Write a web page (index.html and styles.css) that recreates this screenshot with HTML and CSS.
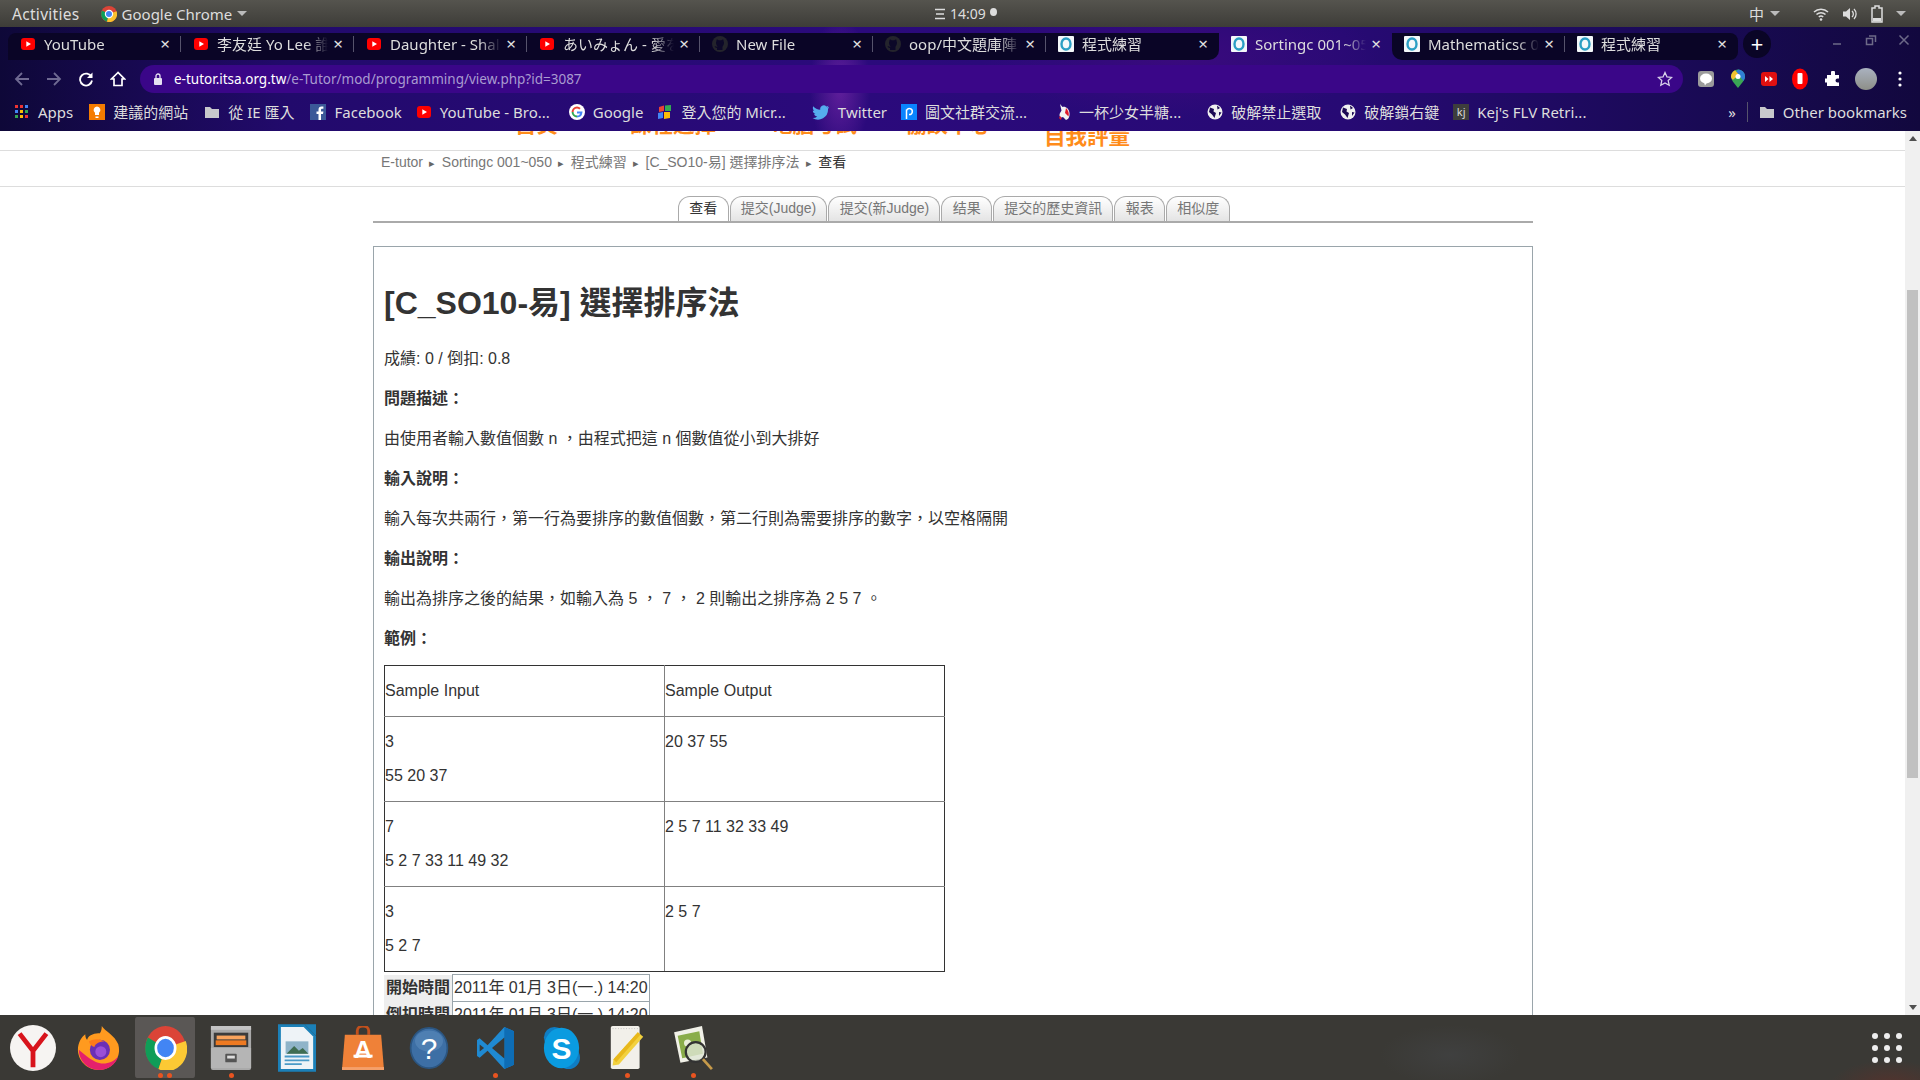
FILE: index.html
```html
<!DOCTYPE html>
<html lang="zh-Hant">
<head>
    <meta charset="UTF-8">
    <title>程式練習</title>
    <link rel="stylesheet" href="styles.css">
</head>
<body>

<svg class="defs" width="0" height="0">
    <symbol id="yt" viewBox="0 0 16 16"><rect x="1" y="2" width="14" height="12" rx="3" fill="#f00"/><path d="M6.3 5.2 11 8l-4.700 2.800z" fill="#fff"/></symbol>
    <symbol id="gh" viewBox="0 0 16 16"><circle cx="8" cy="8" r="8" fill="#24242c"/><path d="M5 14V12C3 12 3 10.500 2.500 10 4 10 4 11 5.500 11 5.500 10 4 9 4 7 4 6 4.300 5.500 4.500 5 4.400 4 4.700 3.500 5 3.500 5.500 3.500 6.300 4 6.500 4.300h3C9.700 4 10.500 3.500 11 3.500c.3 0 .6.500.5 1.500.2.500.5 1 .5 2 0 2-1.500 3-1.500 4v3z" fill="#0c0828"/></symbol>
    <symbol id="itsa" viewBox="0 0 16 16"><rect width="16" height="16" rx="1" fill="#f4f8fa"/><ellipse cx="8" cy="8" rx="4.500" ry="5.500" fill="none" stroke="#2b9fc4" stroke-width="2.400"/></symbol>
    <symbol id="globe" viewBox="0 0 16 16"><circle cx="8" cy="8" r="7.500" fill="#f0f0f0"/><path d="M3 3.500 7 5 6.500 7.500 9 9 7.500 14 5 10.500 2 8zM10 1.500 13 4 10.500 5.500zM12 8l2.500.5L12 12z" fill="#1d0a55"/></symbol>
    <symbol id="folder" viewBox="0 0 16 16"><path d="M1 3h5l2 2h7v9H1z" fill="#c8c8cc"/></symbol>
</svg>

<!-- Ubuntu top bar -->
<div class="topbar">
    <div class="top-left">
        <span class="activities">Activities</span>
        <span class="app-name">
            <svg width="16" height="16" viewBox="0 0 16 16"><circle cx="8" cy="8" r="8" fill="#db4437"/><path d="M8 8 1 4.500A8 8 0 0 0 6 15.800z" fill="#0f9d58"/><path d="M8 8l7.500-2.800A8 8 0 0 1 6 15.800z" fill="#fbc02d"/><circle cx="8" cy="8" r="3.600" fill="#4285f4" stroke="#fff" stroke-width="1.200"/></svg>
            Google Chrome <i class="caret"></i>
        </span>
    </div>
    <div class="clock">
        <svg width="12" height="12" viewBox="0 0 12 12"><path d="M1 1.500h10M2 6h8M1 10.500h10" stroke="#ddd" stroke-width="1.500"/></svg>
        <span>14:09</span><i class="clock-dot"></i>
    </div>
    <div class="top-right">
        <span class="ime">中</span><i class="caret"></i>
        <svg class="wifi" width="16" height="16" viewBox="0 0 16 16"><path d="M1 6a10 10 0 0 1 14 0M3.500 8.500a6.500 6.500 0 0 1 9 0M5.800 11a3.300 3.300 0 0 1 4.400 0" fill="none" stroke="#ddd" stroke-width="1.500"/><circle cx="8" cy="13.500" r="1.300" fill="#ddd"/></svg>
        <svg width="16" height="16" viewBox="0 0 16 16"><path d="M1 5.500h3L8 2v12l-4-3.500H1z" fill="#ddd"/><path d="M10 5a4 4 0 0 1 0 6M12 3a7 7 0 0 1 0 10" fill="none" stroke="#ddd" stroke-width="1.300"/></svg>
        <svg width="12" height="18" viewBox="0 0 12 18"><path d="M4 1h4v2h3v14H1V3h3z" fill="none" stroke="#ddd" stroke-width="1.500"/><rect x="2" y="13" width="8" height="3.500" fill="#ddd"/></svg>
        <i class="caret"></i>
    </div>
</div>

<!-- Chrome window frame -->
<div class="chrome">
    <div class="tabstrip">
        <div class="tab"><svg class="favicon"><use href="#yt"/></svg><span class="tab-title">YouTube</span><span class="tab-x">×</span></div>
        <div class="tab"><svg class="favicon"><use href="#yt"/></svg><span class="tab-title">李友廷 Yo Lee 誰</span><span class="tab-x">×</span></div>
        <div class="tab"><svg class="favicon"><use href="#yt"/></svg><span class="tab-title">Daughter - Shall</span><span class="tab-x">×</span></div>
        <div class="tab"><svg class="favicon"><use href="#yt"/></svg><span class="tab-title">あいみょん - 愛を</span><span class="tab-x">×</span></div>
        <div class="tab"><svg class="favicon"><use href="#gh"/></svg><span class="tab-title">New File</span><span class="tab-x">×</span></div>
        <div class="tab"><svg class="favicon"><use href="#gh"/></svg><span class="tab-title">oop/中文題庫陣</span><span class="tab-x">×</span></div>
        <div class="tab before-active"><svg class="favicon"><use href="#itsa"/></svg><span class="tab-title">程式練習</span><span class="tab-x">×</span></div>
        <div class="tab active"><svg class="favicon"><use href="#itsa"/></svg><span class="tab-title">Sortingc 001~05</span><span class="tab-x">×</span></div>
        <div class="tab after-active"><svg class="favicon"><use href="#itsa"/></svg><span class="tab-title">Mathematicsc 0</span><span class="tab-x">×</span></div>
        <div class="tab last"><svg class="favicon"><use href="#itsa"/></svg><span class="tab-title">程式練習</span><span class="tab-x">×</span></div>
        <div class="new-tab">+</div>
        <div class="window-btns">
            <svg width="12" height="12" viewBox="0 0 12 12"><path d="M1 10h8" stroke="#6d6a88" stroke-width="1.500"/></svg>
            <svg width="12" height="12" viewBox="0 0 12 12"><path d="M1.500 4.500h6v6h-6zM4 2h6.500v6" fill="none" stroke="#6d6a88" stroke-width="1.500"/></svg>
            <svg width="12" height="12" viewBox="0 0 12 12"><path d="M1.500 1.500l9 9M10.500 1.500l-9 9" stroke="#6d6a88" stroke-width="1.500"/></svg>
        </div>
    </div>

    <div class="toolbar">
        <div class="nav-btns">
            <svg width="16" height="16" viewBox="0 0 16 16"><path d="M15 8H2M8 2 2 8l6 6" fill="none" stroke="#6f6a92" stroke-width="1.800"/></svg>
            <svg width="16" height="16" viewBox="0 0 16 16"><path d="M1 8h13M8 2l6 6-6 6" fill="none" stroke="#6f6a92" stroke-width="1.800"/></svg>
            <svg width="16" height="16" viewBox="0 0 16 16"><path d="M13.500 6A6 6 0 1 0 14 9.500" fill="none" stroke="#fff" stroke-width="1.800"/><path d="M14.500 1.500V7H9z" fill="#fff"/></svg>
            <svg width="16" height="16" viewBox="0 0 16 16"><path d="M8 1.500 1.500 8H4v6.500h8V8h2.500z" fill="none" stroke="#fff" stroke-width="1.700"/></svg>
        </div>
        <div class="omnibox">
            <svg width="10" height="12" viewBox="0 0 10 12"><rect x="1" y="5" width="8" height="7" rx="1" fill="#e6e0f2"/><path d="M3 5V3a2 2 0 0 1 4 0v2" fill="none" stroke="#e6e0f2" stroke-width="1.300"/></svg>
            <span class="url"><b>e-tutor.itsa.org.tw</b>/e-Tutor/mod/programming/view.php?id=3087</span>
            <svg class="star" width="16" height="16" viewBox="0 0 16 16"><path d="M8 1.500l2 4.400 4.700.5-3.500 3.200 1 4.700L8 11.900l-4.200 2.400 1-4.700L1.300 6.400 6 5.900z" fill="none" stroke="#d8d2ea" stroke-width="1.300"/></svg>
        </div>
        <div class="ext-btns">
            <svg width="18" height="18" viewBox="0 0 18 18"><rect x="1" y="1" width="16" height="16" rx="3" fill="#9b9b9b"/><ellipse cx="9" cy="8.500" rx="6" ry="5" fill="#fff"/><path d="M7 12.500h3l-2 3z" fill="#fff"/></svg>
            <svg width="18" height="20" viewBox="0 0 18 20"><path d="M9 19C5 14 2 11 2 7.500a7 7 0 0 1 14 0C16 11 13 14 9 19z" fill="#3aa655"/><path d="M9 .5a7 7 0 0 1 7 7c0 1.500-.5 2.800-1.500 4.500L7 3z" fill="#2f7fd6"/><path d="M2 7.500C2 5 3.500 2.500 6 1.200l4 4.500-6 5C2.500 9.700 2 8.500 2 7.500z" fill="#f2c230"/><circle cx="9" cy="7.500" r="2.500" fill="#fff"/></svg>
            <svg width="16" height="14" viewBox="0 0 16 14"><rect width="16" height="14" rx="3" fill="#e01010"/><path d="M4 4l3.500 3L4 10zM8.500 4l3.500 3-3.500 3z" fill="#fff"/></svg>
            <svg width="18" height="22" viewBox="0 0 18 22"><ellipse cx="9" cy="11" rx="8" ry="10.500" fill="#f00"/><rect x="6.500" y="5" width="5" height="11" rx="1" fill="#fff"/></svg>
            <svg class="puzzle" width="16" height="16" viewBox="0 0 16 16"><path d="M6 1.500a2 2 0 0 1 4 0V4h4v3.500h-1.500a2 2 0 0 0 0 4H14V15H2v-3.500H.5a2 2 0 0 1 0-4H2V4h4z" fill="#fff"/></svg>
            <span class="avatar"></span>
            <svg width="4" height="16" viewBox="0 0 4 16"><circle cx="2" cy="2" r="1.600" fill="#fff"/><circle cx="2" cy="8" r="1.600" fill="#fff"/><circle cx="2" cy="14" r="1.600" fill="#fff"/></svg>
        </div>
    </div>

    <div class="bookmarks">
        <div class="bm first">
            <svg width="14" height="14" viewBox="0 0 14 14"><g><rect x="0" y="0" width="3" height="3" fill="#e33"/><rect x="5" y="0" width="3" height="3" fill="#e33"/><rect x="10" y="0" width="3" height="3" fill="#4285f4"/><rect x="0" y="5" width="3" height="3" fill="#4285f4"/><rect x="5" y="5" width="3" height="3" fill="#fbbc05"/><rect x="10" y="5" width="3" height="3" fill="#34a853"/><rect x="0" y="10" width="3" height="3" fill="#34a853"/><rect x="5" y="10" width="3" height="3" fill="#fbbc05"/><rect x="10" y="10" width="3" height="3" fill="#e33"/></g></svg>
            Apps
        </div>
        <div class="bm"><svg width="16" height="16" viewBox="0 0 16 16"><rect width="16" height="16" fill="#f57c00"/><path d="M8 2.500a3.500 3.500 0 0 1 2 6.300V11H6V8.800a3.500 3.500 0 0 1 2-6.300zM6.500 12.500h3V14h-3z" fill="#fff"/></svg>建議的網站</div>
        <div class="bm"><svg width="16" height="16"><use href="#folder"/></svg>從 IE 匯入</div>
        <div class="bm tight"><svg width="16" height="16" viewBox="0 0 16 16"><rect width="16" height="16" fill="#3b5998"/><path d="M11 16V10h2l.4-2.500H11V6c0-.8.3-1.200 1.200-1.200h1.200V2.600C13 2.500 12.300 2.500 11.600 2.500 9.700 2.500 8.500 3.600 8.500 5.700v1.800h-2V10h2v6z" fill="#fff"/></svg>Facebook</div>
        <div class="bm long"><svg width="16" height="16"><use href="#yt"/></svg>YouTube - Bro...</div>
        <div class="bm tight"><svg width="16" height="16" viewBox="0 0 16 16"><circle cx="8" cy="8" r="8" fill="#fff"/><path d="M8 3.500a4.500 4.500 0 0 1 3 1.200" fill="none" stroke="#ea4335" stroke-width="2"/><path d="M3.600 8a4.500 4.500 0 0 1 4.400-4.500" fill="none" stroke="#ea4335" stroke-width="2"/><path d="M3.600 8A4.500 4.500 0 0 0 8 12.500" fill="none" stroke="#34a853" stroke-width="2"/><path d="M8 12.500a4.500 4.500 0 0 0 4.400-4H8" fill="none" stroke="#4285f4" stroke-width="2"/></svg>Google</div>
        <div class="bm wide"><svg width="16" height="16" viewBox="0 0 16 16"><path d="M2 3l5-1.500v5.500L2 8z" fill="#ea4335"/><path d="M8 1.500 14 1v6L8 7z" fill="#34a853"/><path d="M1 9l5-1v6l-5 1z" fill="#4285f4"/><path d="M7 8l6 0v6l-6 1z" fill="#fbbc05"/></svg>登入您的 Micr...</div>
        <div class="bm tight"><svg width="18" height="16" viewBox="0 0 18 16"><path d="M17 3c-.6.300-1.300.500-2 .6.700-.4 1.300-1.100 1.500-1.900-.7.400-1.400.7-2.200.9a3.500 3.500 0 0 0-6 3.200C5.500 5.600 3 4.300 1.300 2.200c-.9 1.600-.5 3.600 1 4.700-.5 0-1-.2-1.500-.4 0 1.700 1.200 3.100 2.800 3.500-.5.100-1 .2-1.600.1.500 1.400 1.800 2.400 3.300 2.400A7 7 0 0 1 .5 14 10 10 0 0 0 16 5c.4-.5.800-1.200 1-2z" fill="#55acee"/></svg>Twitter</div>
        <div class="bm widest"><svg width="16" height="16" viewBox="0 0 16 16"><rect width="16" height="16" fill="#0a84ff"/><path d="M5.500 15V5.500M5.500 6.500A3 3 0 1 1 8 10.500" fill="none" stroke="#fff" stroke-width="1.500"/></svg>圖文社群交流...</div>
        <div class="bm wide"><svg width="14" height="18" viewBox="0 0 14 18"><path d="M3 1l2.500 3C8 3 12 5 12.500 10c.3 3-.5 6-3.500 7L6 14c-2 1-3.500 0-3.500-2S4 9 4.500 7.500z" fill="#f2f2f2"/><path d="M9 5c2 2 3.500 5 2.500 8.500L8 10z" fill="#e01a2b"/><path d="M3 13c1 1 2 2 1 4L2 15z" fill="#e01a2b"/></svg>一杯少女半糖...</div>
        <div class="bm long"><svg width="16" height="16"><use href="#globe"/></svg>破解禁止選取</div>
        <div class="bm tight"><svg width="16" height="16"><use href="#globe"/></svg>破解鎖右鍵</div>
        <div class="bm"><span class="kj">kj</span>Kej's FLV Retri...</div>
        <div class="bm-more">»</div>
        <div class="bm other"><svg width="16" height="16"><use href="#folder"/></svg>Other bookmarks</div>
    </div>
</div>

<!-- Page in the browser -->
<div class="viewport">
    <div class="page">
        <div class="site-menu">
            <span>首頁</span>
            <span>課程選擇</span>
            <span>電腦考試</span>
            <span>協談中心</span>
            <span class="low">自我評量</span>
        </div>
        <div class="breadcrumb">
            <a>E-tutor</a> <i>▸</i> <a>Sortingc 001~050</a> <i>▸</i> <a>程式練習</a> <i>▸</i> <a>[C_SO10-易] 選擇排序法</a> <i>▸</i> 查看
        </div>
        <div class="tabs">
            <a class="tabs-on">查看</a>
            <a>提交(Judge)</a>
            <a>提交(新Judge)</a>
            <a>结果</a>
            <a>提交的歷史資訊</a>
            <a>報表</a>
            <a>相似度</a>
        </div>
        <div class="box">
            <h1>[C_SO10-易] 選擇排序法</h1>
            <p>成績: 0 / 倒扣: 0.8</p>
            <p><strong>問題描述：</strong></p>
            <p>由使用者輸入數值個數 n ，由程式把這 n 個數值從小到大排好</p>
            <p><strong>輸入說明：</strong></p>
            <p>輸入每次共兩行，第一行為要排序的數值個數，第二行則為需要排序的數字，以空格隔開</p>
            <p><strong>輸出說明：</strong></p>
            <p>輸出為排序之後的結果，如輸入為 5 ， 7 ， 2 則輸出之排序為 2 5 7 。</p>
            <p><strong>範例：</strong></p>
            <table class="samples">
                <tr><td><p>Sample Input</p></td><td><p>Sample Output</p></td></tr>
                <tr><td><p>3</p><p>55 20 37</p></td><td><p>20 37 55</p></td></tr>
                <tr><td><p>7</p><p>5 2 7 33 11 49 32</p></td><td><p>2 5 7 11 32 33 49</p></td></tr>
                <tr><td><p>3</p><p>5 2 7</p></td><td><p>2 5 7</p></td></tr>
            </table>
            <table class="times">
                <tr><th>開始時間</th><td>2011年 01月 3日(一.) 14:20</td></tr>
                <tr><th>倒扣時間</th><td>2011年 01月 3日(一.) 14:20</td></tr>
            </table>
        </div>
    </div>
    <div class="scrollbar">
        <i class="arrow-up"></i>
        <div class="thumb"></div>
        <i class="arrow-down"></i>
    </div>
</div>

<!-- Ubuntu dock -->
<div class="dock">
    <div class="dock-item">
        <svg width="46" height="46" viewBox="0 0 48 48"><ellipse cx="24" cy="24" rx="24" ry="24" fill="#f6f4f2"/><path d="M10 9l14 18 14-18M24 26v18" fill="none" stroke="#d8141c" stroke-width="5"/></svg>
    </div>
    <div class="dock-item">
        <svg width="44" height="46" viewBox="0 0 48 50"><path d="M27 1c4 6 14 10 18 20 4 14-6 28-21 28C10 49 1 38 1 27c0-8 4-14 8-17 0 3 1 5 2 6 2-6 9-7 14-7 2-3 2-6 2-8z" fill="#ff9a1f"/><path d="M2 27c0 12 10 22 22 22 10 0 18-6 21-15-6 8-17 10-25 6C12 36 8 32 2 27z" fill="#e5206c"/><circle cx="25" cy="27" r="11" fill="#6b2fb5"/><path d="M13 18c6-4 13-3 17 0-5 0-10 2-11 6-3-1-5-3-6-6z" fill="#ff7a1a"/><circle cx="26" cy="29" r="6" fill="#9a4fd6"/></svg>
    </div>
    <div class="dock-item active">
        <svg width="43" height="44" viewBox="0 0 46 50"><ellipse cx="23" cy="25" rx="23" ry="25" fill="#db4437"/><path d="M23 25 3 13A23 25 0 0 0 15 49z" fill="#0f9d58"/><path d="M23 25 46 17A23 25 0 0 1 15 49z" fill="#fcc934"/><ellipse cx="23" cy="25" rx="11" ry="12" fill="#4285f4" stroke="#fff" stroke-width="3"/></svg>
        <i class="pip"></i><i class="pip"></i>
    </div>
    <div class="dock-item">
        <svg width="42" height="44" viewBox="0 0 42 46"><rect width="42" height="46" rx="2" fill="#a9a9a9"/><rect width="42" height="4" fill="#c4c4c4"/><rect x="3" y="7" width="36" height="15" fill="#3b3b3b"/><rect x="6" y="10" width="30" height="4" fill="#f9a35c"/><rect x="5" y="15" width="32" height="5" fill="#ee7a22"/><rect x="0" y="23" width="42" height="21" fill="#b5b5b5"/><rect x="15" y="29" width="12" height="9" rx="1" fill="#555"/><rect x="17" y="31" width="8" height="3" fill="#ddd"/></svg>
        <i class="pip"></i>
    </div>
    <div class="dock-item">
        <svg width="38" height="48" viewBox="0 0 40 50"><path d="M0 0h28l12 12v38H0z" fill="#1b80b8"/><path d="M3 3h24l10 10v34H3z" fill="#eef3f7"/><path d="M28 0l12 12V0z" fill="#1b80b8"/><rect x="8" y="18" width="24" height="13" fill="#8fb4c9"/><path d="M9 31l8-8 5 5 4-3 6 6z" fill="#3f6d52"/><path d="M7 34h26M7 38h26M7 42h18" stroke="#4a9ac7" stroke-width="2"/></svg>
    </div>
    <div class="dock-item">
        <svg width="42" height="44" viewBox="0 0 44 46"><path d="M16 9V5a6 5 0 0 1 12 0v4" fill="none" stroke="#c2501c" stroke-width="3"/><path d="M3 9h38l3 37H0z" fill="#ef8138"/><rect x="0" y="43" width="44" height="3" fill="#f5a06b"/><text x="22" y="34" class="store-a">A</text><rect x="12" y="30" width="20" height="3" fill="#fff"/></svg>
    </div>
    <div class="dock-item">
        <svg width="40" height="42" viewBox="0 0 44 48"><ellipse cx="22" cy="24" rx="21" ry="23" fill="#3d6fa5" stroke="#2b5580" stroke-width="2"/><ellipse cx="22" cy="16" rx="16" ry="12" fill="#5f8fc0" opacity=".5"/><text x="22" y="36" class="help-q">?</text></svg>
    </div>
    <div class="dock-item">
        <svg width="43" height="44" viewBox="0 0 44 50"><path d="M32 1 13 22 4 14 1 16v18l3 2 9-8 19 21 11-5V6z" fill="#1f8ad2"/><path d="M32 1v48l11-5V6z" fill="#0e6db5"/><path d="M32 13 18 25l14 12z" fill="#3a3935"/><path d="M4 21 9 25 4 29z" fill="#3a3935"/></svg>
        <i class="pip"></i>
    </div>
    <div class="dock-item">
        <svg width="43" height="44" viewBox="0 0 44 50"><circle cx="14" cy="13" r="12" fill="#0f7dc4"/><circle cx="30" cy="36" r="13" fill="#0f7dc4"/><ellipse cx="22" cy="25" rx="20" ry="23" fill="#0a9be0"/><text x="22" y="37" class="skype-s">S</text></svg>
    </div>
    <div class="dock-item">
        <svg width="38" height="45" viewBox="0 0 38 50"><rect x="1" y="1" width="32" height="48" rx="2" fill="#f2f0ea"/><path d="M3 4h28" stroke="#bbb" stroke-dasharray="1 2"/><path d="M31 8l6 5L10 44l-7 1 1-7z" fill="#f2d13e"/><path d="M31 8l3 2.500L7 41.500 4 38z" fill="#e8b81c"/></svg>
        <i class="pip"></i>
    </div>
    <div class="dock-item">
        <svg width="44" height="45" viewBox="0 0 48 50"><path d="M3 8 34 1l6 35-30 6z" fill="#f1f1e8"/><path d="M7 12l24-5 4 25-23 5z" fill="#8aad4a"/><circle cx="18" cy="20" r="4" fill="#e9eed8"/><circle cx="27" cy="30" r="11" fill="#dfe6d5" stroke="#333" stroke-width="2.500" fill-opacity=".8"/><path d="M35 38l10 11" stroke="#c69a4a" stroke-width="3"/></svg>
        <i class="pip"></i>
    </div>
    <div class="app-grid">
        <i></i><i></i><i></i><i></i><i></i><i></i><i></i><i></i><i></i>
    </div>
</div>

</body>
</html>
```

FILE: styles.css
```css
* {
    box-sizing: border-box;
}
html, body {
    margin: 0;
    height: 100%;
}
body {
    width: 1920px;
    height: 1080px;
    overflow: hidden;
    display: flex;
    flex-direction: column;
    font-family: "Noto Sans", "Noto Sans CJK TC", sans-serif;
    background: #3a3935;
}
.defs {
    position: absolute;
}
i {
    font-style: normal;
}

/* top bar */
.topbar {
    height: 27px;
    flex: none;
    display: flex;
    align-items: center;
    justify-content: space-between;
    padding: 0 12px;
    background: linear-gradient(#55544e, #3d3c38);
    color: #ddd;
    font-size: 15px;
    position: relative;
}
.top-left {
    display: flex;
    align-items: center;
    gap: 21px;
}
.activities {
    font-size: 15.500px;
    letter-spacing: .3px;
}
.app-name {
    display: flex;
    align-items: center;
    gap: 5px;
}
.caret {
    display: inline-block;
    width: 0;
    height: 0;
    border-left: 5px solid transparent;
    border-right: 5px solid transparent;
    border-top: 5px solid #bbb;
}
.clock {
    position: absolute;
    left: 934px;
    top: 0;
    height: 27px;
    font-size: 14px;
    display: flex;
    align-items: center;
    gap: 4px;
}
.clock-dot {
    width: 7px;
    height: 8px;
    border-radius: 50%;
    background: #ddd;
    margin-top: -3px;
}
.top-right {
    display: flex;
    align-items: center;
    gap: 13px;
    margin-right: 2px;
}
.ime {
    margin-right: -7px;
}
.wifi {
    margin-left: 20px;
}

/* chrome frame */
.chrome {
    flex: none;
    height: 104px;
    color: #ddd;
    font-size: 15px;
    background:
        radial-gradient(ellipse 30px 70px at 840px 60px, rgba(120, 40, 170, .7), transparent),
        radial-gradient(ellipse 200px 60px at 1180px 30px, rgba(70, 10, 130, .6), transparent),
        linear-gradient(90deg, #0e0838 0, #220a6c 15%, #2b0a7c 45%, #270a74 70%, #180a52 90%, #12083e 100%);
}
.tabstrip {
    height: 33px;
    display: flex;
    padding: 6px 0 0 8px;
}
.tab {
    width: 173px;
    height: 27px;
    flex: none;
    display: flex;
    align-items: center;
    padding: 0 8px 6px 12px;
    background: #0a0526;
    position: relative;
}
.tab:first-child {
    border-radius: 8px 0 0 0;
}
.tab::after {
    content: "";
    position: absolute;
    right: 0;
    top: 3px;
    height: 16px;
    width: 1px;
    background: #56536c;
}
.tab.active {
    background: transparent;
    border-radius: 8px 8px 0 0;
}
.tab.active::after, .tab.before-active::after, .tab.last::after {
    display: none;
}
.tab.before-active {
    border-radius: 0 0 10px 0;
}
.tab.after-active {
    border-radius: 0 0 0 10px;
}
.tab.last {
    border-radius: 0 8px 8px 0;
}
.favicon {
    width: 16px;
    height: 16px;
    flex: none;
    margin-right: 8px;
}
.tab-title {
    flex: 1;
    white-space: nowrap;
    overflow: hidden;
    -webkit-mask-image: linear-gradient(90deg, #000 80%, transparent 100%);
    mask-image: linear-gradient(90deg, #000 80%, transparent 100%);
}
.tab-x {
    width: 16px;
    margin-left: 2px;
    text-align: center;
    font-size: 17px;
    line-height: 16px;
    color: #e0e0e0;
}
.new-tab {
    width: 28px;
    height: 28px;
    flex: none;
    margin: -3px 0 0 5px;
    border-radius: 50%;
    background: #0a0526;
    color: #fff;
    text-align: center;
    font-size: 22px;
    line-height: 26px;
}
.window-btns {
    display: flex;
    gap: 21px;
    margin-left: 61px;
    padding-top: 1px;
}
.toolbar {
    height: 38px;
    display: flex;
    align-items: center;
    padding-left: 14px;
}
.nav-btns {
    display: flex;
    gap: 16px;
    width: 126px;
    flex: none;
}
.omnibox {
    width: 1543px;
    height: 28px;
    flex: none;
    display: flex;
    align-items: center;
    padding: 0 10px 0 13px;
    border-radius: 14px;
    background: #3a0688;
}
.url {
    margin-left: 11px;
    flex: 1;
    font-size: 13.500px;
    color: #a99bd0;
}
.url b {
    font-weight: 400;
    color: #fff;
}
.ext-btns {
    flex: none;
    display: flex;
    align-items: center;
    gap: 14px;
    margin-left: 14px;
}
.puzzle {
    margin-left: 2px;
}
.avatar {
    width: 22px;
    height: 22px;
    border-radius: 50%;
    background: linear-gradient(#aab2c0, #8d8f88);
    margin-right: 7px;
}
.bookmarks {
    height: 33px;
    display: flex;
    align-items: center;
    padding: 0 0 6px 15px;
    white-space: nowrap;
}
.bm {
    display: flex;
    align-items: center;
    gap: 8px;
    margin-right: 16px;
}
.bm.first {
    gap: 9px;
}
.bm.tight {
    margin-right: 14px;
}
.bm.long {
    margin-right: 19px;
}
.bm.wide {
    margin-right: 26px;
}
.bm.widest {
    margin-right: 30px;
}
.kj {
    width: 16px;
    height: 16px;
    background: #3d3d3d;
    color: #ddd;
    font-size: 11px;
    line-height: 15px;
    text-align: center;
}
.bm-more {
    margin-left: auto;
    padding-right: 11px;
    border-right: 1px solid #56536c;
    margin-right: 11px;
    line-height: 20px;
}
.bm.other {
    margin-right: 13px;
}

/* page area */
.viewport {
    flex: none;
    height: 884px;
    display: flex;
    overflow: hidden;
    background: #fff;
}
.page {
    flex: 1;
    min-width: 0;
    overflow: hidden;
    font-family: "Liberation Sans", "Noto Sans CJK TC", sans-serif;
    color: #333;
    font-size: 16px;
    line-height: 24px;
}
.site-menu {
    margin-top: -18px;
    height: 38px;
    display: grid;
    grid-template-columns: 115px 141px 134px 139px auto;
    padding-left: 515px;
    border-bottom: 1px solid #ddd;
    color: #ff8c1a;
    font-size: 21.500px;
    font-weight: 700;
    line-height: 24px;
}
.site-menu .low {
    margin-top: 12px;
}
.breadcrumb {
    height: 36px;
    padding: 1px 0 0 381px;
    border-bottom: 1px solid #ddd;
    font-size: 14px;
    line-height: 20px;
    color: #333;
}
.breadcrumb a {
    color: #777;
}
.breadcrumb i {
    font-size: 11px;
    color: #666;
    margin: 0 2.500px;
}
.tabs {
    width: 1160px;
    height: 27px;
    margin: 9px 0 0 373px;
    padding-left: 305px;
    display: flex;
    gap: 1px;
    border-bottom: 2px solid #aaa;
}
.tabs a {
    height: 25px;
    padding: 0 10.250px;
    border: 1px solid #aaa;
    border-bottom: none;
    border-radius: 12px 12px 0 0;
    background: linear-gradient(#fff, #e4e4e4);
    color: #777;
    font-size: 14px;
    line-height: 23px;
}
.tabs a.tabs-on {
    background: #fff;
    color: #333;
}
.box {
    width: 1160px;
    height: 900px;
    margin: 23px 0 0 373px;
    padding: 38px 10px 0;
    border: 1px solid #9aa5ab;
}
.box h1 {
    margin: 0 0 26px;
    font-size: 32px;
    line-height: 36px;
    font-weight: 700;
}
.box p {
    margin: 0 0 16px;
}
.samples {
    width: 561px;
    margin-top: -2px;
    table-layout: fixed;
    border-collapse: collapse;
}
.samples td {
    padding: 3px 0;
    border: 1px solid #808080;
    vertical-align: top;
}
.samples tr:first-child td {
    border-top-color: #333;
}
.samples tr:last-child td {
    border-bottom-color: #333;
}
.samples td:first-child {
    border-left-color: #333;
}
.samples td:last-child {
    border-right-color: #333;
}
.samples p {
    margin: 10px 0;
}
.times {
    margin-top: 2px;
    border-collapse: collapse;
}
.times th {
    padding: 0 2px;
    background: #eee;
    font-weight: 700;
    line-height: 26px;
}
.times td {
    padding: 0 1px;
    border: 1px solid #9aa5ab;
    line-height: 26px;
}

/* scrollbar */
.scrollbar {
    width: 15px;
    flex: none;
    display: flex;
    flex-direction: column;
    align-items: center;
    background: #f0f0f0;
}
.arrow-up {
    margin-top: 5px;
    border-left: 4px solid transparent;
    border-right: 4px solid transparent;
    border-bottom: 5px solid #505050;
}
.thumb {
    width: 11px;
    height: 488px;
    margin-top: 149px;
    background: #c1c1c1;
}
.arrow-down {
    margin-top: auto;
    margin-bottom: 5px;
    border-left: 4px solid transparent;
    border-right: 4px solid transparent;
    border-top: 5px solid #505050;
}

/* dock */
.dock {
    flex: none;
    height: 65px;
    display: flex;
    align-items: center;
    background:
        radial-gradient(ellipse 70px 30px at 1450px 40px, rgba(80, 85, 95, .25), transparent),
        radial-gradient(ellipse 60px 25px at 1890px 70px, rgba(130, 40, 30, .35), transparent),
        #3a3935;
}
.dock-item {
    width: 66px;
    height: 65px;
    flex: none;
    display: flex;
    align-items: center;
    justify-content: center;
    position: relative;
}
.dock-item.active {
    background: #5a5755;
    background-clip: content-box;
    padding: 2px 3px;
    border-radius: 5px;
}
.pip {
    position: absolute;
    bottom: 2px;
    left: 31px;
    width: 5px;
    height: 5px;
    border-radius: 50%;
    background: #e95420;
}
.active .pip {
    left: 26px;
}
.active .pip + .pip {
    left: 35px;
}
.store-a {
    font: 700 26px "Liberation Sans", sans-serif;
    fill: #fff;
    text-anchor: middle;
}
.help-q {
    font: 400 34px "Liberation Sans", sans-serif;
    fill: #fff;
    text-anchor: middle;
}
.skype-s {
    font: 700 34px "Liberation Sans", sans-serif;
    fill: #fff;
    text-anchor: middle;
}
.app-grid {
    margin-left: auto;
    margin-right: 18px;
    display: grid;
    grid-template-columns: repeat(3, 6px);
    gap: 6px;
}
.app-grid i {
    width: 6px;
    height: 6px;
    border-radius: 50%;
    background: #eee;
}
```
